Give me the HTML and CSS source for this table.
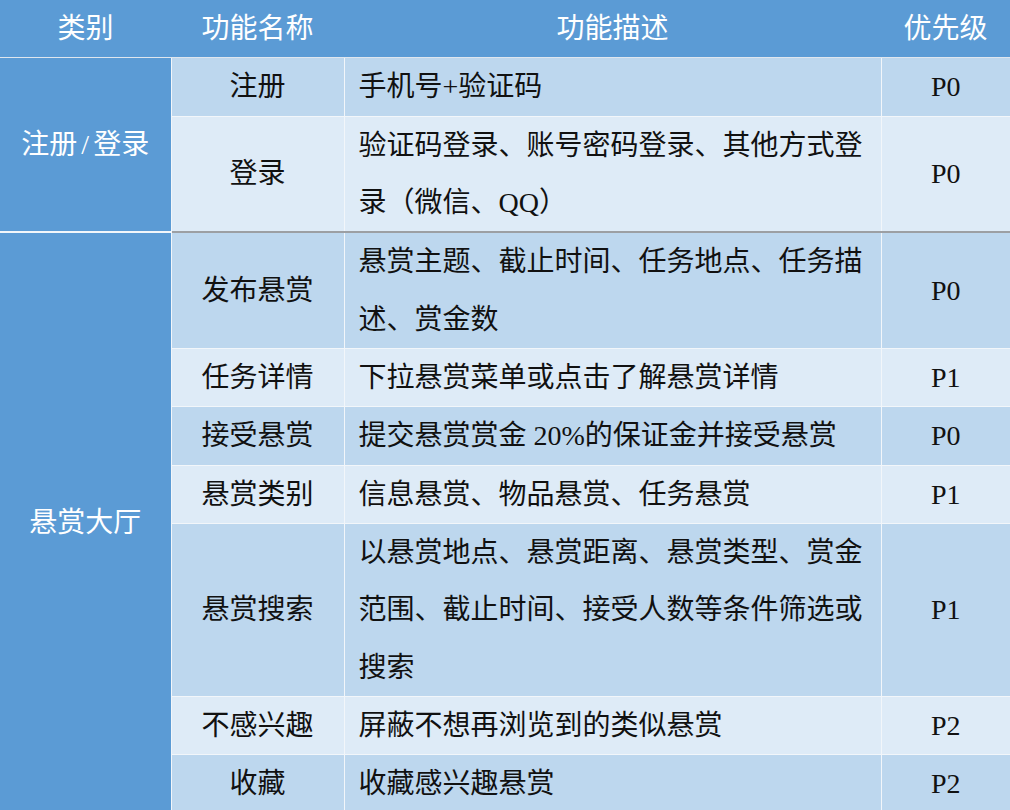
FILE: index.html
```html
<!DOCTYPE html>
<html lang="zh">
<head>
<meta charset="utf-8">
<link rel="stylesheet" href="styles.css">
</head>
<body>
<table class="spec">
  <colgroup>
    <col class="c-cat">
    <col class="c-name">
    <col class="c-desc">
    <col class="c-pri">
  </colgroup>
  <thead>
    <tr class="head">
      <th>类别</th>
      <th>功能名称</th>
      <th>功能描述</th>
      <th class="pri">优先级</th>
    </tr>
  </thead>
  <tbody>
    <tr class="dark">
      <td class="cat" rowspan="2">注册<span class="slash">/</span>登录</td>
      <td class="name">注册</td>
      <td class="desc">手机号+验证码</td>
      <td class="pri">P0</td>
    </tr>
    <tr class="light">
      <td class="name">登录</td>
      <td class="desc">验证码登录、账号密码登录、其他方式登录（微信、QQ）</td>
      <td class="pri">P0</td>
    </tr>
    <tr class="dark group">
      <td class="cat" rowspan="7">悬赏大厅</td>
      <td class="name">发布悬赏</td>
      <td class="desc">悬赏主题、截止时间、任务地点、任务描述、赏金数</td>
      <td class="pri">P0</td>
    </tr>
    <tr class="light">
      <td class="name">任务详情</td>
      <td class="desc">下拉悬赏菜单或点击了解悬赏详情</td>
      <td class="pri">P1</td>
    </tr>
    <tr class="dark">
      <td class="name">接受悬赏</td>
      <td class="desc">提交悬赏赏金 20%的保证金并接受悬赏</td>
      <td class="pri">P0</td>
    </tr>
    <tr class="light">
      <td class="name">悬赏类别</td>
      <td class="desc">信息悬赏、物品悬赏、任务悬赏</td>
      <td class="pri">P1</td>
    </tr>
    <tr class="dark">
      <td class="name">悬赏搜索</td>
      <td class="desc">以悬赏地点、悬赏距离、悬赏类型、赏金范围、截止时间、接受人数等条件筛选或搜索</td>
      <td class="pri">P1</td>
    </tr>
    <tr class="light">
      <td class="name">不感兴趣</td>
      <td class="desc">屏蔽不想再浏览到的类似悬赏</td>
      <td class="pri">P2</td>
    </tr>
    <tr class="dark">
      <td class="name">收藏</td>
      <td class="desc">收藏感兴趣悬赏</td>
      <td class="pri">P2</td>
    </tr>
  </tbody>
</table>
</body>
</html>
```

FILE: styles.css
```css
html, body {
  margin: 0;
  padding: 0;
  background: #ffffff;
}

.spec {
  border-collapse: collapse;
  table-layout: fixed;
  width: 1010px;
  font-family: "Liberation Serif", "Noto Sans CJK SC", serif;
  font-size: 28px;
  line-height: 57.35px;
  color: #111111;
}

.c-cat { width: 171px; }
.c-name { width: 173px; }
.c-desc { width: 537px; }
.c-pri { width: 129px; }

.spec th,
.spec td {
  padding: 0;
  border: 1px solid #f2f6fa;
  vertical-align: middle;
  text-align: center;
  font-weight: normal;
}

.head th {
  background: #5b9bd5;
  color: #ffffff;
  height: 57px;
  border-top: none;
  border-left: none;
  border-right: none;
  border-bottom: 1px solid #dfe6ee;
}

.spec .cat {
  background: #5b9bd5;
  color: #ffffff;
  border-left: none;
  border-color: #f2f6fa;
}

.slash {
  margin: 0 4px;
}

.dark td { background: #bdd7ee; }
.light td { background: #deebf7; }
.dark td.cat, .light td.cat { background: #5b9bd5; }

.spec td.desc {
  text-align: left;
  padding-left: 14px;
  padding-right: 8px;
}

.spec td.pri {
  border-left: 1px solid #c8cdd3;
  border-right: none;
}

.group td {
  border-top: 2px solid #9c9fa3;
}
```
